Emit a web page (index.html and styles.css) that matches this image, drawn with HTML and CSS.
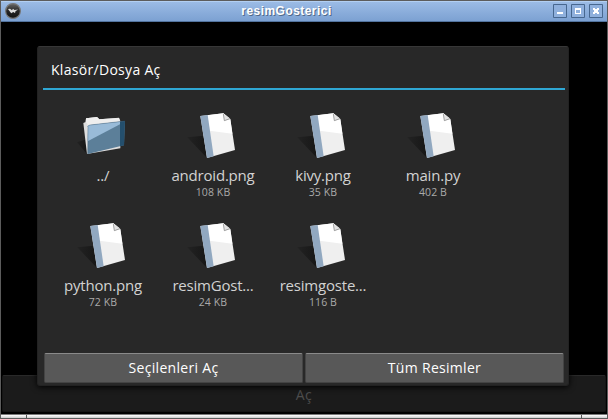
FILE: index.html
```html
<!DOCTYPE html>
<html lang="tr">
<head>
<meta charset="utf-8">
<title>resimGosterici</title>
<link rel="stylesheet" href="styles.css">
</head>
<body>
<svg width="0" height="0" class="defs">
  <defs>
    <linearGradient id="shade" x1="0" y1="0" x2="1" y2="0"><stop offset="0" stop-color="#222"/><stop offset="1" stop-color="#171717"/></linearGradient>
    <linearGradient id="ball" x1="0" y1="0" x2="0" y2="1"><stop offset="0" stop-color="#666"/><stop offset=".5" stop-color="#252525"/><stop offset="1" stop-color="#111"/></linearGradient>
    <symbol id="file" viewBox="-6 0 330 180">
      <path d="M82 112L131 107L141 174Z" fill="url(#shade)"/>
      <path d="M121 48L190 40L211 58L225 150L141 174Z" fill="#efefef"/>
      <path d="M142 46L190 40L211 58L217 101L149 92Z" fill="#fff"/>
      <path d="M121 48L143 45L161 169L141 174Z" fill="#91a8c0"/>
      <path d="M190 40L193 62L211 56Z" fill="#e2e2e2"/>
      <path d="M190 42L193 62L210 56" fill="none" stroke="#777" stroke-width="2"/>
    </symbol>
    <symbol id="folder" viewBox="-36 0 330 180">
      <path d="M51 127L75 119L81 162Z" fill="url(#shade)"/>
      <path d="M70 69L77 66L78 55L111 51L118 58L177 53L181 63L181 145L81 162Z" fill="#dedede"/>
      <path d="M78 55L111 51L118 58L177 54L180 64L84 75L77 66Z" fill="#eee"/>
      <path d="M84 79Q85 76 90 75L195 63L192 136L83 162Z" fill="#5c7f99"/>
      <path d="M84 79Q85 76 90 75L180 65L180 73L83 124Z" fill="#99bbd8"/>
      <path d="M180 65L195 63L192 136L180 139Z" fill="#244f6d"/>
      <path d="M83 162L84 79Q85 76 90 75L195 63" fill="none" stroke="#31536c" stroke-width="1"/>
    </symbol>
  </defs>
</svg>
<div class="window">
  <header class="titlebar">
    <svg class="logo" width="16" height="16" viewBox="0 0 16 16"><circle cx="8" cy="8" r="7.4" fill="url(#ball)" stroke="#777" stroke-width="1.2"/><path d="M3 6L5 5.8L7 7.2L8 5.7L9.5 7L13 6.6L10.5 8.3L10 10L8.2 9L6.2 10.2Z" fill="#ddd"/></svg>
    <h1 class="title">resimGosterici</h1>
    <div class="controls">
      <svg width="14" height="14" viewBox="0 0 14 14"><path class="frame" d="M.5.5h13v13H.5z"/><path class="glyph" d="M4 8h6v2H4z"/></svg>
      <svg width="14" height="14" viewBox="0 0 14 14"><path class="frame" d="M.5.5h13v13H.5z"/><path class="glyph" fill-rule="evenodd" d="M4 4h6v6H4zM5 6v3h4V6z"/></svg>
      <svg width="14" height="14" viewBox="0 0 14 14"><path class="frame" d="M.5.5h13v13H.5z"/><path class="glyph" d="M4 4h2v1h2V4h2v2H9v2h1v2H8V9H6v1H4V8h1V6H4z"/></svg>
    </div>
  </header>
  <main class="client">
    <div class="open">Aç</div>
    <section class="dialog">
      <h2 class="heading">Klasör/Dosya Aç</h2>
      <div class="files">
        <div class="item"><svg class="icon"><use href="#folder"/></svg><span class="name">../</span></div>
        <div class="item"><svg class="icon"><use href="#file"/></svg><span class="name">android.png</span><span class="size">108 KB</span></div>
        <div class="item"><svg class="icon"><use href="#file"/></svg><span class="name">kivy.png</span><span class="size">35 KB</span></div>
        <div class="item"><svg class="icon"><use href="#file"/></svg><span class="name">main.py</span><span class="size">402 B</span></div>
        <div class="item"><svg class="icon"><use href="#file"/></svg><span class="name">python.png</span><span class="size">72 KB</span></div>
        <div class="item"><svg class="icon"><use href="#file"/></svg><span class="name">resimGost...</span><span class="size">24 KB</span></div>
        <div class="item"><svg class="icon"><use href="#file"/></svg><span class="name">resimgoste...</span><span class="size">116 B</span></div>
      </div>
      <div class="actions"><div class="button">Seçilenleri Aç</div><div class="button">Tüm Resimler</div></div>
    </section>
  </main>
  <footer class="grip"></footer>
</div>
</body>
</html>
```
FILE: styles.css
```css
* { box-sizing: border-box; }
body { margin: 0; background: #000; font-family: "Open Sans", "Noto Sans", sans-serif; }
.defs { position: absolute; }
.window { width: 608px; height: 419px; border: 1px solid #5c5c5c; display: flex; flex-direction: column; overflow: hidden; }
.titlebar { height: 21px; flex: none; display: grid; grid-template-columns: 60px 1fr 60px; background: linear-gradient(#9bbbe5, #7ca1d2); border-top: 1px solid #b2cff2; border-bottom: 1px solid #53749f; }
.logo { margin: 1px 0 0 4px; }
.title { margin: 0; text-align: center; font: bold 12px/18px "Liberation Sans", sans-serif; letter-spacing: .45px; color: #fff; text-shadow: 1px 1px 0 #50698a; padding-right: 35px; }
.controls { display: flex; gap: 4px; margin: 2px 0 0 6px; }
.frame { fill: #8fb0dd; stroke: #47678f; }
.glyph { fill: #fff; }
.client { position: relative; height: 392px; flex: none; padding: 353px 1px 1px; background: #000; }
.open { height: 37px; border: 1px solid #151515; border-top-color: #292929; border-radius: 2px; background: #1b1b1b; color: #4d4d4d; font-size: 14px; line-height: 37px; text-align: center; letter-spacing: .4px; }
.dialog { position: absolute; left: 36px; top: 24px; width: 532px; height: 340px; padding: 0 4px 4px 5px; border: 1px solid #222; border-top-color: #373737; border-radius: 3px; background: #282828; box-shadow: 0 1px 6px #000; display: flex; flex-direction: column; }
.heading { margin: 0 -1px 0 0; height: 43px; flex: none; padding-left: 8px; border-bottom: 2px solid #2fa7d4; font-size: 14px; font-weight: 400; line-height: 46px; color: #fff; letter-spacing: .3px; }
.files { display: grid; grid-template-columns: repeat(4, 110px); grid-auto-rows: 110px; margin: 10px 0 0 5px; flex: 1; }
.item { display: flex; flex-direction: column; align-items: center; }
.icon { width: 110px; height: 60px; flex: none; }
.name { font-size: 15px; font-weight: 500; line-height: 20px; margin-top: 5px; color: #d2d2d2; letter-spacing: -.2px; white-space: nowrap; }
.size { font-size: 10.5px; line-height: 15px; color: #aaa; letter-spacing: .1px; white-space: nowrap; }
.actions { display: grid; grid-template-columns: 259px 259px; gap: 2px; height: 28px; margin-left: 1px; flex: none; }
.button { border: 1px solid #444; border-top: 1px solid #8a8a8a; border-radius: 2px; background: #585858; color: #fff; font-size: 14px; line-height: 28px; text-align: center; letter-spacing: .3px; }
.grip { height: 4px; flex: none; border-top: 1px solid #777; background: linear-gradient(90deg, transparent 25px, #555 25px, #555 26px, transparent 26px, transparent 580px, #555 580px, #555 581px, transparent 581px), linear-gradient(#fff, #ccc); }
```
